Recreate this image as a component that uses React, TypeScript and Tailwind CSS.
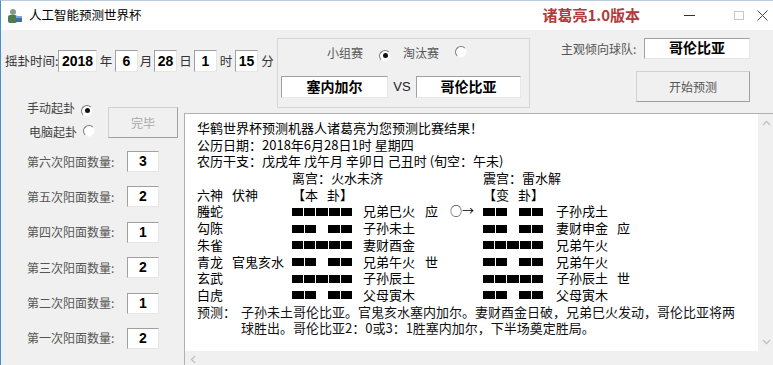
import React from "react";

const ui = "font-['Noto_Sans_CJK_SC',sans-serif]";
const num = "font-['Liberation_Sans','Noto_Sans_CJK_SC',sans-serif]";

const sunken =
  "bg-white border border-t-[#a0a0a0] border-l-[#a0a0a0] border-r-[#e6e6e6] border-b-[#e6e6e6] flex items-center justify-center shrink-0 whitespace-nowrap";

function Radio({ checked }: { checked?: boolean }) {
  return (
    <span className="inline-flex w-[12px] h-[12px] rounded-full bg-white border border-t-[#7a7a7a] border-l-[#7a7a7a] border-r-[#f4f4f4] border-b-[#f4f4f4] items-center justify-center">
      {checked && <span className="w-[5px] h-[5px] rounded-full bg-[#111]" />}
    </span>
  );
}

function Box({ value, w, h = 22, size = "text-[14px]" }: { value: string; w: number; h?: number; size?: string }) {
  return (
    <div className={`${sunken} ${num} ${size} font-bold text-black`} style={{ width: w, height: h }}>
      {value}
    </div>
  );
}

function Yao({ yang }: { yang: boolean }) {
  if (yang) {
    return (
      <div className="flex gap-[1px] w-[60px] shrink-0">
        {[0, 1, 2, 3, 4].map((i) => (
          <span key={i} className="w-[11.2px] h-[8px] bg-black" />
        ))}
      </div>
    );
  }
  return (
    <div className="flex justify-between w-[60px] shrink-0">
      {[0, 1].map((g) => (
        <div key={g} className="flex gap-[1px]">
          <span className="w-[11.5px] h-[8px] bg-black" />
          <span className="w-[11.5px] h-[8px] bg-black" />
        </div>
      ))}
    </div>
  );
}

const rows: [string, string, boolean, string, string, string, boolean, string, string][] = [
  ["螣蛇", "", true, "兄弟巳火", "应", "○→", false, "子孙戌土", ""],
  ["勾陈", "", false, "子孙未土", "", "", false, "妻财申金", "应"],
  ["朱雀", "", true, "妻财酉金", "", "", true, "兄弟午火", ""],
  ["青龙", "官鬼亥水", false, "兄弟午火", "世", "", false, "兄弟午火", ""],
  ["玄武", "", true, "子孙辰土", "", "", true, "子孙辰土", "世"],
  ["白虎", "", false, "父母寅木", "", "", false, "父母寅木", ""],
];

const counts = [
  ["第六次阳面数量:", "3"],
  ["第五次阳面数量:", "2"],
  ["第四次阳面数量:", "1"],
  ["第三次阳面数量:", "2"],
  ["第二次阳面数量:", "1"],
  ["第一次阳面数量:", "2"],
];

function AppIcon() {
  return (
    <svg width="16" height="16" viewBox="0 0 16 16">
      <circle cx="6" cy="4" r="3" fill="#8a9a8a" />
      <rect x="1" y="7" width="9" height="8" rx="2" fill="#4f7a4f" />
      <rect x="9" y="8" width="6" height="6" fill="#3d6fa8" />
      <rect x="9" y="8" width="6" height="2" fill="#7fa7d6" />
    </svg>
  );
}

export default function App() {
  return (
    <div className={`w-[773px] h-[365px] overflow-hidden bg-[#f0f0f0] border-l border-l-[#4a8fc8] border-t border-t-[#b8cde0] flex flex-col whitespace-nowrap ${ui}`}>
      {/* title bar */}
      <div className="h-[29px] bg-white flex items-center shrink-0">
        <div className="ml-[6px]">
          <AppIcon />
        </div>
        <span className="ml-[6px] text-[12.5px] text-black">人工智能预测世界杯</span>
        <div className="flex-1" />
        <span className="text-[15px] font-bold text-[#b23a3a]">诸葛亮1.0版本</span>
        <span className="ml-[44px] w-[11px] h-[1px] bg-[#333]" />
        <span className="ml-[39px] w-[10px] h-[9px] border border-[#c8c8c8]" />
        <svg className="ml-[13px] mr-[5px]" width="11" height="11" viewBox="0 0 11 11">
          <path d="M0.5 0.5L10.5 10.5M10.5 0.5L0.5 10.5" stroke="#444" strokeWidth="1" />
        </svg>
      </div>

      {/* top controls */}
      <div className="h-[80px] flex items-start shrink-0">
        <div className="mt-[20px] h-[22px] flex items-center pl-[4px] text-[12.5px] text-[#333]">
          <span className="w-[53px]">摇卦时间:</span>
          <Box value="2018" w={39} />
          <span className="w-[18px] text-center">年</span>
          <Box value="6" w={23} />
          <span className="w-[16px] text-center">月</span>
          <Box value="28" w={23} />
          <span className="w-[17px] text-center">日</span>
          <Box value="1" w={23} />
          <span className="w-[18px] text-center">时</span>
          <Box value="15" w={23} />
          <span className="w-[19px] text-center">分</span>
        </div>

        <div className="mt-[8px] w-[253px] h-[70px] shrink-0 border border-[#d6d6d6] flex flex-col">
          <div className="mt-[6px] h-[16px] flex items-center pl-[49px] text-[12px] text-[#555]">
            <span>小组赛</span>
            <span className="ml-[16px]"><Radio checked /></span>
            <span className="ml-[12px]">淘汰赛</span>
            <span className="ml-[16px]"><Radio /></span>
          </div>
          <div className="mt-[15px] flex items-center pl-[3px]">
            <Box value="塞内加尔" w={107} size="text-[14px]" />
            <span className={`w-[28px] text-center text-[13px] text-[#222] ${num}`}>VS</span>
            <Box value="哥伦比亚" w={105} size="text-[14px]" />
          </div>
        </div>

        <div className="ml-[31px] flex flex-col items-end">
          <div className="mt-[8px] flex items-center">
            <span className="w-[83px] text-[12px] text-[#555]">主观倾向球队:</span>
            <Box value="哥伦比亚" w={106} h={21} />
          </div>
          <button className="mt-[12px] w-[114px] h-[31px] bg-[#f0f0f0] border border-[#d0d0d0] border-r-[#a0a0a0] border-b-[#a0a0a0] text-[12px] text-[#555]">
            开始预测
          </button>
        </div>
      </div>

      {/* bottom */}
      <div className="flex flex-1 min-h-0">
        <div className="w-[183px] shrink-0 -mt-[10px] flex flex-col">
          <div className="flex items-start">
            <div className="pl-[26px] flex flex-col text-[12px] text-[#444]">
              <div className="h-[16px] flex items-center">
                <span>手动起卦</span>
                <span className="ml-[6px]"><Radio checked /></span>
              </div>
              <div className="mt-[8px] h-[16px] flex items-center pl-[2px]">
                <span>电脑起卦</span>
                <span className="ml-[6px]"><Radio /></span>
              </div>
            </div>
            <button className="ml-[13px] mt-[7px] w-[70px] h-[31px] bg-[#f0f0f0] border border-[#d0d0d0] border-r-[#a0a0a0] border-b-[#a0a0a0] text-[12px] text-[#a8a8a8]">
              完毕
            </button>
          </div>
          <div className="mt-[11px] flex flex-col gap-[14.4px]">
            {counts.map(([label, v]) => (
              <div key={label} className="flex items-center pl-[26px] h-[21px]">
                <span className="w-[100px] text-[12px] text-[#555]">{label}</span>
                <Box value={v} w={32} h={21} />
              </div>
            ))}
          </div>
        </div>

        <div className="mt-[3px] w-[592px] h-[256px] shrink-0 bg-white border border-[#b0b0b0] flex flex-col">
          <div className="flex flex-1 min-h-0">
            <div className="flex-1 pl-[12px] pt-[6px] text-[13px] leading-[16.7px] text-black">
              <div>华鹤世界杯预测机器人诸葛亮为您预测比赛结果！</div>
              <div>公历日期：2018年6月28日1时 星期四</div>
              <div>农历干支：戊戌年 戊午月 辛卯日 己丑时 (旬空：午未)</div>
              <div className="flex h-[16.7px]">
                <span className="w-[95px]" />
                <span className="w-[191px]">离宫：火水未济</span>
                <span>震宫：雷水解</span>
              </div>
              <div className="flex h-[16.7px]">
                <span className="w-[35px]">六神</span>
                <span className="w-[60px]">伏神</span>
                <span className="w-[61px] flex justify-between">
                  <span>【本</span>
                  <span>卦】</span>
                </span>
                <span className="w-[130px]" />
                <span className="w-[61px] flex justify-between">
                  <span>【变</span>
                  <span>卦】</span>
                </span>
              </div>
              {rows.map((r) => (
                <div key={r[0]} className="flex items-center h-[16.7px]">
                  <span className="w-[35px]">{r[0]}</span>
                  <span className="w-[60px]">{r[1]}</span>
                  <Yao yang={r[2]} />
                  <span className="ml-[11px] w-[62px]">{r[3]}</span>
                  <span className="w-[25px]">{r[4]}</span>
                  <span className="w-[33px] text-[12px]">{r[5]}</span>
                  <Yao yang={r[6]} />
                  <span className="ml-[13px] w-[61px]">{r[7]}</span>
                  <span>{r[8]}</span>
                </div>
              ))}
              <div className="flex text-[#111]">
                <span className="w-[44px] shrink-0">预测：</span>
                <div>
                  <div>子孙未土哥伦比亚。官鬼亥水塞内加尔。妻财酉金日破，兄弟巳火发动，哥伦比亚将两</div>
                  <div>球胜出。哥伦比亚2：0或3：1胜塞内加尔，下半场奠定胜局。</div>
                </div>
              </div>
            </div>
            <div className="w-[17px] shrink-0 bg-[#f0f0f0] flex flex-col items-center justify-between py-[6px]">
              <svg width="9" height="6" viewBox="0 0 9 6">
                <path d="M1 5L4.5 1.5L8 5" stroke="#c0c0c0" strokeWidth="1.3" fill="none" />
              </svg>
              <svg width="9" height="6" viewBox="0 0 9 6">
                <path d="M1 1L4.5 4.5L8 1" stroke="#c0c0c0" strokeWidth="1.3" fill="none" />
              </svg>
            </div>
          </div>
          <div className="h-[17px] shrink-0 bg-[#f0f0f0] flex items-center pl-[5px]">
            <svg width="6" height="9" viewBox="0 0 6 9">
              <path d="M5 1L1.5 4.5L5 8" stroke="#c0c0c0" strokeWidth="1.3" fill="none" />
            </svg>
          </div>
        </div>
      </div>
    </div>
  );
}
